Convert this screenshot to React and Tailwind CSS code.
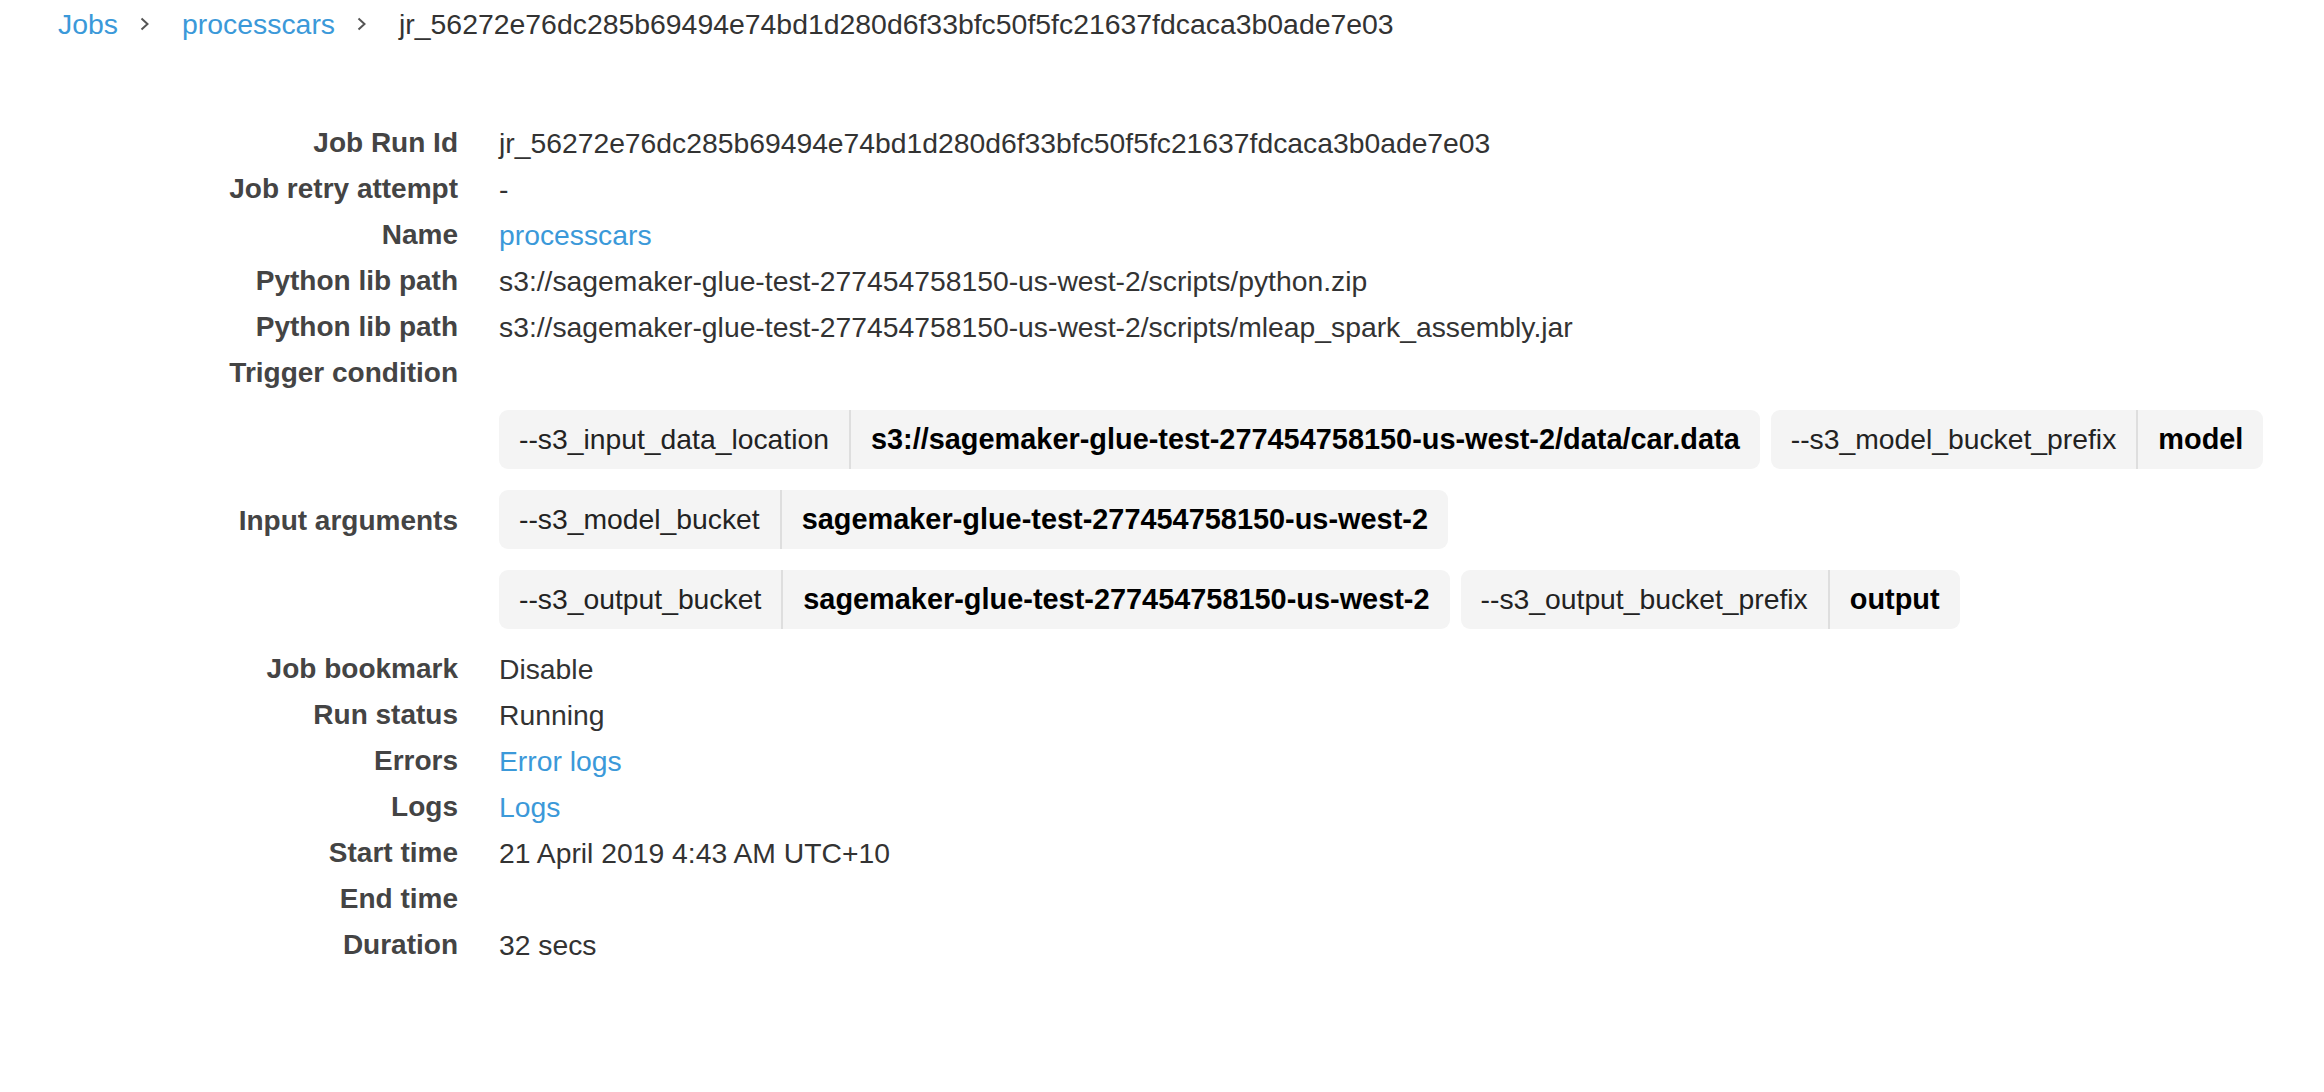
import React from "react";

const Chevron = () => (
  <svg width="12" height="16" viewBox="0 0 12 16" className="ml-[21px] mr-[31px] shrink-0">
    <path d="M2.5 2.5 L8.5 8 L2.5 13.5" fill="none" stroke="#555" strokeWidth="2" />
  </svg>
);

const Row = ({ label, children }) => (
  <>
    <div className="h-[46px] flex items-center justify-end font-bold text-[#444]">{label}</div>
    <div className="h-[46px] flex items-center text-[28.3px] text-[#333]">{children}</div>
  </>
);

const args = [
  ["--s3_input_data_location", "s3://sagemaker-glue-test-277454758150-us-west-2/data/car.data"],
  ["--s3_model_bucket_prefix", "model"],
  ["--s3_model_bucket", "sagemaker-glue-test-277454758150-us-west-2"],
  ["--s3_output_bucket", "sagemaker-glue-test-277454758150-us-west-2"],
  ["--s3_output_bucket_prefix", "output"],
];

const App = () => {
  const runId = "jr_56272e76dc285b69494e74bd1d280d6f33bfc50f5fc21637fdcaca3b0ade7e03";

  return (
    <div
      className="min-h-[1092px] bg-white text-[28px] leading-none text-[#333]"
      style={{ fontFamily: '"Liberation Sans", Arial, sans-serif' }}
    >
      <div className="h-[48px] flex items-center pl-[58px] text-[28.4px]">
        <span className="text-[#3b99d9]">Jobs</span>
        <Chevron />
        <span className="text-[#3b99d9]">processcars</span>
        <Chevron />
        <span className="text-[#333]">{runId}</span>
      </div>

      <div className="mt-[72px] grid grid-cols-[458px_1fr] gap-x-[41px] pr-[40px]">
        <Row label="Job Run Id">{runId}</Row>
        <Row label="Job retry attempt">-</Row>
        <Row label="Name">
          <span className="text-[#3b99d9]">processcars</span>
        </Row>
        <Row label="Python lib path">s3://sagemaker-glue-test-277454758150-us-west-2/scripts/python.zip</Row>
        <Row label="Python lib path">s3://sagemaker-glue-test-277454758150-us-west-2/scripts/mleap_spark_assembly.jar</Row>
        <Row label="Trigger condition"></Row>

        <div className="flex items-center justify-end font-bold text-[#444]">Input arguments</div>
        <div className="pt-[14px] pb-[17px] flex flex-wrap gap-x-[11px] gap-y-[21px]">
          {args.map(([key, value]) => (
            <div key={key} className="h-[59px] flex items-stretch bg-[#f4f4f4] rounded-[9px]">
              <div className="flex items-center px-[20px] text-[28.3px] text-[#222]">{key}</div>
              <div className="w-[2px] bg-[#dedede]" />
              <div className="flex items-center px-[20px] text-[28.9px] font-bold text-black">{value}</div>
            </div>
          ))}
        </div>

        <Row label="Job bookmark">Disable</Row>
        <Row label="Run status">Running</Row>
        <Row label="Errors">
          <span className="text-[#3b99d9]">Error logs</span>
        </Row>
        <Row label="Logs">
          <span className="text-[#3b99d9]">Logs</span>
        </Row>
        <Row label="Start time">21 April 2019 4:43 AM UTC+10</Row>
        <Row label="End time"></Row>
        <Row label="Duration">32 secs</Row>
      </div>
    </div>
  );
};

export default App;
